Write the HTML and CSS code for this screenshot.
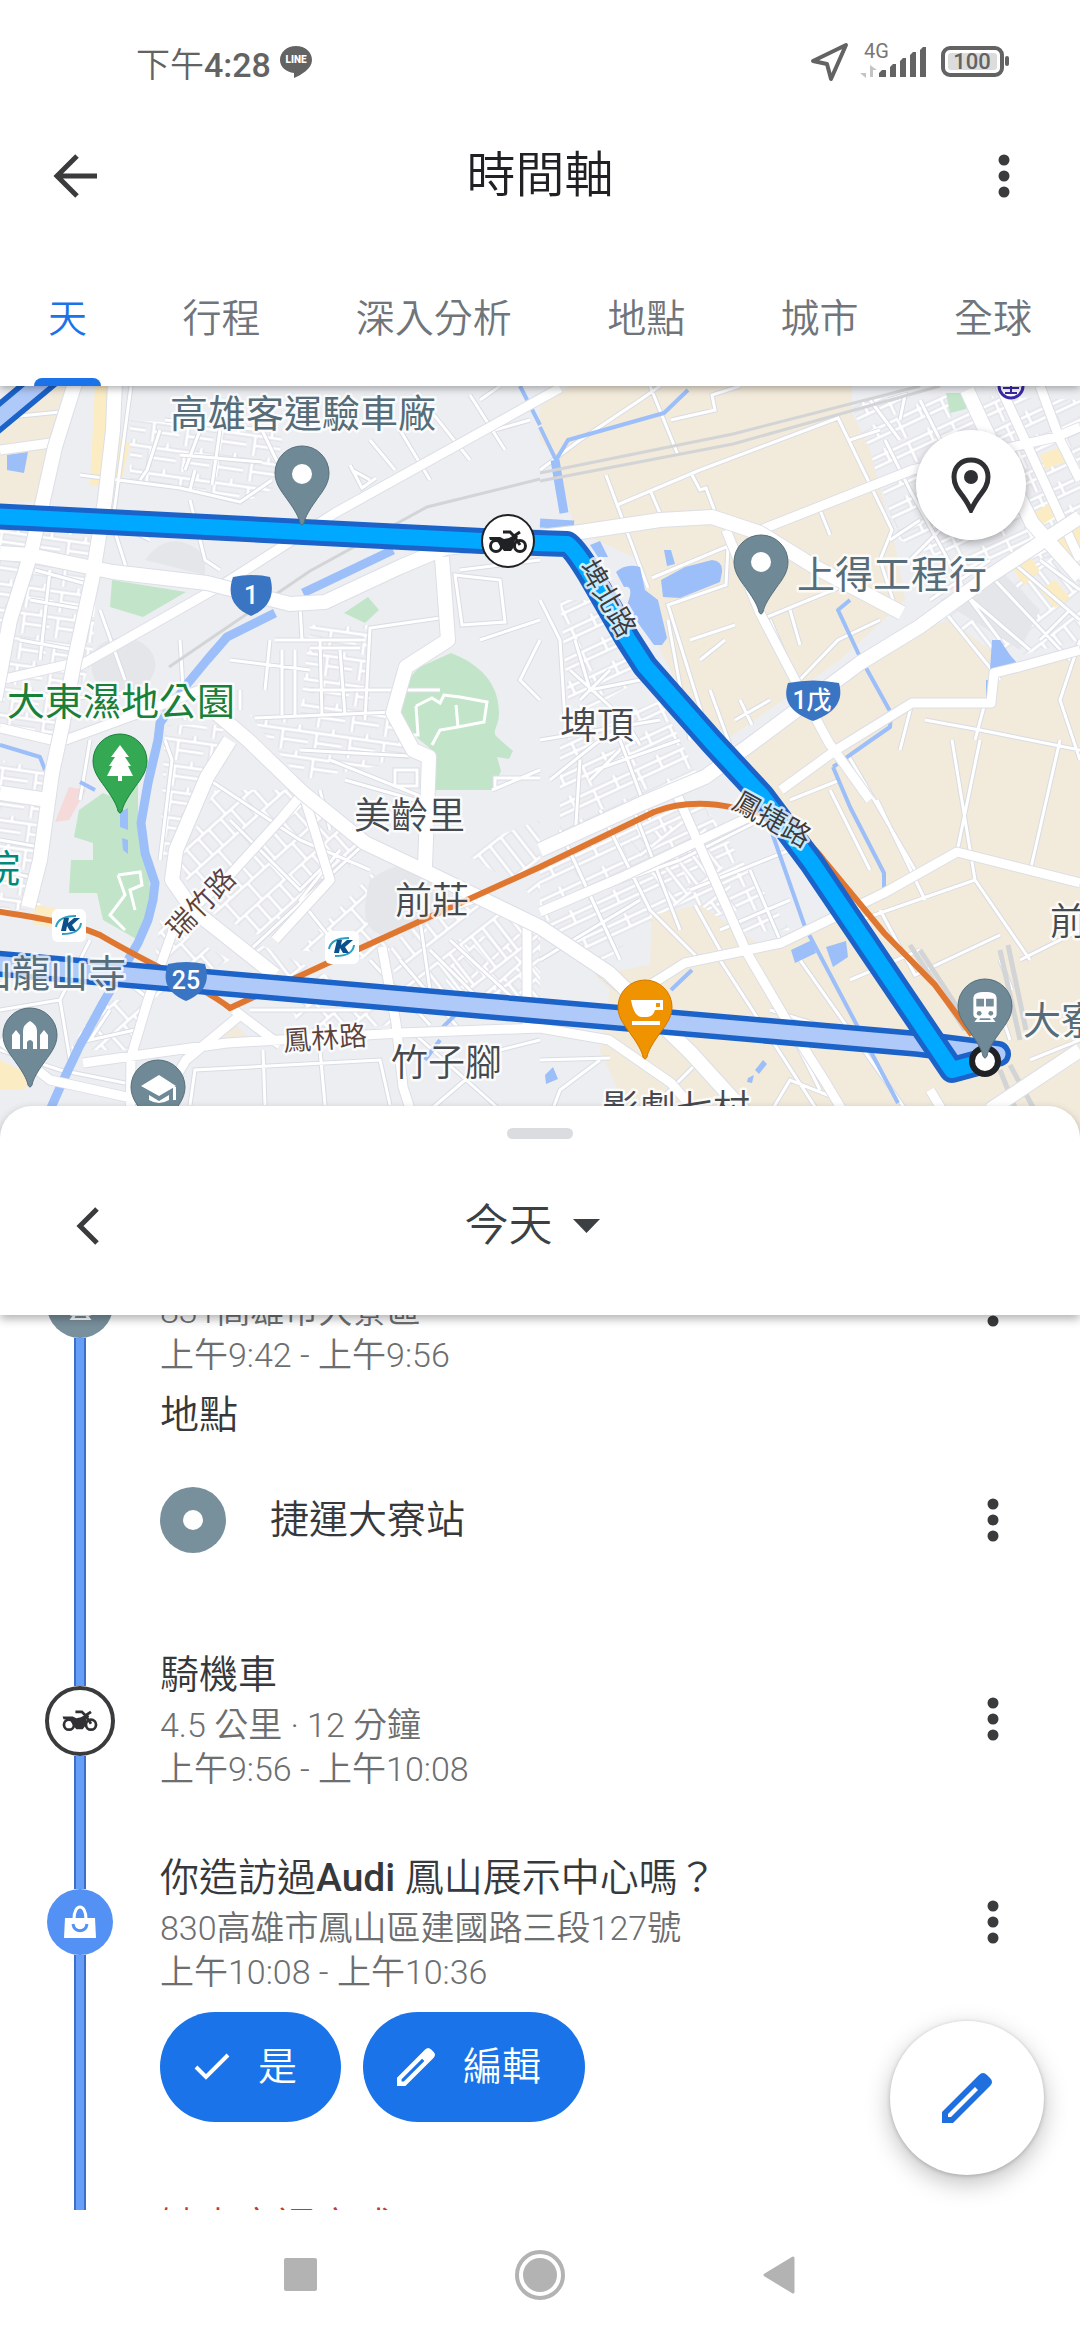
FILE: index.html
```html
<!DOCTYPE html>
<html lang="zh-Hant">
<head>
    <meta charset="UTF-8">
    <meta name="viewport" content="width=device-width, initial-scale=1.0">
    <title>時間軸</title>
    <link rel="stylesheet" href="styles.css">
</head>
<body>

<!-- shared icons -->
<svg class="sprite" aria-hidden="true">
    <symbol id="i-dots" viewBox="0 0 12 44">
        <circle cx="6" cy="6" r="5.5"/><circle cx="6" cy="22" r="5.5"/><circle cx="6" cy="38" r="5.5"/>
    </symbol>
    <symbol id="i-bike" viewBox="0 0 38 24">
        <circle cx="7" cy="16" r="5.5" fill="none" stroke="currentColor" stroke-width="3"/>
        <circle cx="31" cy="16" r="5.5" fill="none" stroke="currentColor" stroke-width="3"/>
        <path d="M0 7h11l4 2 5-1 7-4 2 3-3 3-1 7-3 4h-7l-4-5-3-5-7-1z" fill="currentColor"/>
        <path d="M14 2h7l4 4 6-4M25 6l6 9" fill="none" stroke="currentColor" stroke-width="3"/>
    </symbol>
    <symbol id="i-train" viewBox="0 0 26 32">
        <path d="M4 1.500C8-.5 18-.5 22 1.500 25 3 25 6 25 8v15c0 3-2 4-4 4l3 4H2l3-4c-2 0-4-1-4-4V8c0-2 0-5 3-6.500z" fill="#fff"/>
        <path d="M4 7h8v8H4zM14 7h8v8h-8z" class="pin-ink"/>
        <circle cx="7" cy="22" r="2.500" class="pin-ink"/><circle cx="19" cy="22" r="2.500" class="pin-ink"/>
        <path d="M8 27h10l1 2H7z" class="pin-ink"/>
    </symbol>
    <symbol id="i-pencil" viewBox="0 0 50 50">
        <path d="M0 39 37 2q4-4 8 0l3 3q4 4 0 8L11 50H0zM6 41v3h3l27-27-3-3z" fill-rule="evenodd" fill="currentColor"/>
    </symbol>
    <symbol id="i-pin" viewBox="-30 -30 60 90" overflow="visible">
        <path d="M0-27A27 27 0 0 1 27 0c0 12-8 20-14 29C8 36 3 44 2 50q-2 4-4 0c-1-6-6-14-11-21C-19 20-27 12-27 0A27 27 0 0 1 0-27z"/>
    </symbol>
</svg>

<header class="top">
    <div class="status">
        <span class="clock">下午<b>4:28</b></span>
        <svg class="line-badge" viewBox="0 0 34 34" aria-hidden="true">
            <path d="M17 1C8 1 1 7 1 15c0 7 6 12 14 13v5c7-3 18-9 18-18C33 7 26 1 17 1z" fill="#636363"/>
            <text x="17" y="18" text-anchor="middle" class="line-text">LINE</text>
        </svg>
        <span class="status-gap"></span>
        <svg class="status-icons" viewBox="0 0 200 44" aria-hidden="true">
            <path d="M3 21 36 5 21 39 17 24z" fill="none" stroke="#636363" stroke-width="4" stroke-linejoin="round"/>
            <text x="54" y="18" class="net-text">4G</text>
            <path d="M56 25v8h-6l6 5zM60 37V25l7 5h-4v7z" fill="#c4c4c4"/>
            <path d="M69 37v-4l3-3h4v7zM80 37V27l3-3h3v13zM90 37V21l3-3h3v19zM100 37V15l3-3h3v25zM110 37V10l3-3h3v30z" fill="#636363"/>
            <rect x="133" y="8" width="59" height="27" rx="7" fill="none" stroke="#636363" stroke-width="4"/>
            <rect x="138" y="13" width="49" height="17" rx="3" fill="#dcdcdc"/>
            <rect x="195" y="16" width="4" height="10" rx="2" fill="#636363"/>
            <text x="162" y="29" text-anchor="middle" class="batt-text">100</text>
        </svg>
    </div>
    <div class="appbar">
        <button class="icon-btn" aria-label="返回">
            <svg width="46" height="46" viewBox="0 0 46 46"><path d="M44 23H5M24 3 4 23l20 20" fill="none" stroke="currentColor" stroke-width="5"/></svg>
        </button>
        <h1>時間軸</h1>
        <button class="icon-btn" aria-label="更多選項"><svg class="dots"><use href="#i-dots"/></svg></button>
    </div>
    <nav class="tabs">
        <a class="tab active" href="#day">天</a>
        <a class="tab" href="#trips">行程</a>
        <a class="tab" href="#insights">深入分析</a>
        <a class="tab" href="#places">地點</a>
        <a class="tab" href="#cities">城市</a>
        <a class="tab" href="#world">全球</a>
    </nav>
</header>

<section class="map">
    <svg class="map-canvas" viewBox="0 386 1080 754" preserveAspectRatio="xMidYMin slice" role="img" aria-label="地圖">
        <defs>
            <pattern id="g1" width="34" height="26" patternUnits="userSpaceOnUse" patternTransform="rotate(8)">
                <path class="p-case" d="M0 6h34M8 6v20M24 0v6M8 16h26"/><path class="p-fill" d="M0 6h34M8 6v20M24 0v6M8 16h26"/>
            </pattern>
            <pattern id="g2" width="30" height="44" patternUnits="userSpaceOnUse" patternTransform="rotate(-42)">
                <path class="p-case" d="M0 8h30M0 30h30M6 8v22M20 8v22M13 30v22M13 0v8"/><path class="p-fill" d="M0 8h30M0 30h30M6 8v22M20 8v22M13 30v22M13 0v8"/>
            </pattern>
            <pattern id="g3" width="48" height="26" patternUnits="userSpaceOnUse" patternTransform="rotate(-25)">
                <path class="p-case" d="M0 5h48M12 5v21M0 14h48M36 0v14"/><path class="p-fill" d="M0 5h48M12 5v21M0 14h48M36 0v14"/>
            </pattern>
            <pattern id="g4" width="14" height="60" patternUnits="userSpaceOnUse" patternTransform="rotate(-38)">
                <path class="p-case" d="M0 8h14M5 8v40M0 48h14"/><path class="p-fill" d="M0 8h14M5 8v40M0 48h14"/>
            </pattern>

            <path id="minor" d="M0 418 60 412M80 475 180 488 240 502 272 480M131 386 113 520M160 430 147 470 140 480M165 420 262 430 285 478M200 430 185 470M220 430 212 485M180 455 262 462M195 470 190 490 M352 470 370 480M370 440 395 470M400 430 430 480M430 410 470 460M470 395 505 450M495 430 530 420
                M350 465 362 488 376 478M480 400 500 386M455 575 500 580 505 622 462 625zM460 570 540 560M480 640 540 620M440 618 370 628 365 720M300 606 302 640M310 690 440 690M320 640 322 715M255 718 393 712M270 640 265 690M275 640 365 640M230 660 310 670M240 690 240 710M180 640 185 720M165 740 172 760 160 860
                M310 648 360 648M282 650 282 715M295 650 295 715M340 650 345 715M35 570 90 585M30 600 88 610M20 640 75 650M50 570 40 660M105 500 130 580M110 520 150 540M190 500 205 560 220 570
                M100 610 125 680M60 700 150 690M90 740 80 800M100 760 130 760M0 840 45 848M0 870 42 880M300 750 410 756M330 760 430 800M320 790 330 830M345 780 415 800M395 770h22v16h-22z
                M365 843 250 950M230 820 300 890 330 860M205 777 300 840 370 870M340 850 300 900 340 950M430 990 420 920 480 900M492 790 540 770M495 790v-12h45M540 700 520 680 540 640
                M190 1105 195 1070 380 1060 390 1105M263 1050 265 1105M320 1050 325 1105M400 960 460 1030M430 950 500 1020M450 940 515 1000M370 960 430 1025M250 1010 370 1010M410 1030 500 1110M430 1110 500 1050 540 1040
                M90 940 60 1000 0 1010M60 1000 70 1060M100 960 150 1000M0 1050 60 1070 160 1090M110 1010 90 1040 135 1030
                M540 470 580 440 640 400 660 386M650 386 678 455M671 420 715 410 712 395 740 386M606 475 648 588M650 490 662 518M692 475 700 490 706 488 718 520M617 505 700 470 838 418 892 530 880 560 893 600M540 600 560 640 565 720 590 740M652 578 728 546 726 585 668 605 710 740
                M850 440 880 430M885 440 910 490 970 600 1000 640M870 400 900 440M888 400 905 395 900 420M920 400 940 440M820 510 830 535M760 620 838 588M790 690 838 640 880 620M770 620 785 655M790 610 800 645
                M890 540 920 520M910 560 970 500M930 600 990 560M945 612 1000 680M960 590 1030 650M990 575 1070 660M1010 560 1080 620M1040 560 1080 590M1040 640 1070 610M1080 640 1060 700 1080 760M925 720 980 730 1080 750M985 703 975 740M912 703 900 750M740 700 752 725M735 720 770 700M700 660 725 640M690 640 735 625M710 690 730 745
                M668 620 690 740M575 640 590 690 640 680M570 670 625 720 640 745M580 700 610 670 M540 740 660 720M550 780 600 740M580 760 575 840M590 780 620 750M620 740 650 820M595 770 680 740M560 830 620 960M600 810 650 910M630 800 680 930M540 910 680 860 760 820M540 960 640 900M560 940 630 1000
                M650 910 700 960M695 905 720 950M720 960 830 1130M690 890 790 850M720 930 790 900M750 870 780 940M780 1010 820 1090M800 960 920 1130M770 1010 900 1050M848 755 915 870M877 800 925 900M952 740 975 880M980 740 957 852M1060 740 1030 872M860 920 975 880 1030 960M880 910 915 975 1000 935M850 980 920 950M1080 930 1020 960M1012 990 1000 960M990 980 1010 1040M1030 1060 1080 1040M1030 1080 1070 1060M760 1130 790 1080 840 1100M600 1060 560 1090 545 1130M540 1060 610 1058M650 1110 700 1060M830 790 870 870M790 800 840 780"/>
            <path id="mid" d="M0 450 58 442M560 388 335 513 222 585 72 670M0 728 60 742 148 710 200 690M0 680 74 663M303 793 280 820 230 875 175 925 148 1000 131 1057 130 1140M83 1063 140 1055 227 1043 400 1033 540 1028 609 1040 671 1083 720 1140M234 1010 280 1045M382 947 396 1023 403 1087 420 1140M527 927V1027M238 1017 186 1060 150 1120M0 1040 50 1080 140 1100
                M753 533 912 470 1056 437 1080 427M726 530 760 613 795 680 829 743 870 800M1080 650 1019 667 994 673 991 703 912 703 836 750 781 790M1080 883 957 852 884 893 843 913 781 943 685 963 650 985M678 797 747 953 788 1023 826 1083 860 1140M540 912 620 878 760 812M1000 386 1080 560M1040 386 1060 440 1080 480M930 1090 960 1140M303 793 330 880 275 940"/>
            <path id="major" d="M0 553 30 555 113 572 207 583 290 604 325 602 400 567 445 548 574 533 660 520 712 517 760 533 815 567 902 613M76 380 55 447 42 505 31 553 10 620-5 700M115 380 113 430 105 500 92 580 74 663 62 727 52 773 40 860 28 907M442 557 448 640 406 667 393 713 413 750 429 757 425 867M215 712 248 740 303 793 365 843 437 877 540 927 609 973 691 1053 770 1140
                M230 740 207 777 176 850 172 880 193 910 275 975M0 793 48 800M1080 517 988 577 919 627 860 663 747 747 705 777 643 803 540 850M967 390 984 427 1032 523 1080 577M1080 1050 990 1110"/>
        </defs>

        <rect y="386" width="1080" height="754" class="land"/>
        <!-- street grids -->
        <path d="M0 510 100 520 92 660 60 740 0 735zM0 760 50 770 40 910 0 910zM130 420 280 430 290 480 250 500 130 480zM310 625 370 625 370 710 300 715zM165 725 225 725 180 850 160 860zM250 715 395 715 410 760 300 780z" fill="url(#g1)"/>
        <path d="M215 790 295 790 370 850 270 940 195 905 180 860zM455 940 540 930 540 1010 440 1010zM285 990 400 1000 396 1025 300 1030zM100 1000 150 1000 130 1050 70 1050zM375 870 430 890 430 930 370 960 300 950zM160 920 230 960 150 1000z" fill="url(#g2)"/>
        <path d="M540 860 640 810 700 800 790 930 700 935 660 915 600 965 540 920zM850 400 960 395 1080 400 1080 560 980 575 900 540zM560 740 660 700 700 780 560 840zM560 600 600 600 640 680 570 720z" fill="url(#g3)"/>
        <path d="M440 890 540 930 540 1015 400 1000 390 950zM250 940 380 1000 270 990zM460 850 540 820 540 900zM930 610 1080 530 1080 640 1000 660zM630 840 700 815 740 910 680 920z" fill="url(#g4)"/>
        <!-- farmland -->
        <path d="M570 386 852 386 852 413 870 450 895 545 905 600 840 660 712 750 655 640 640 560 575 530 556 460 540 440 540 400z" class="farm"/>
        <path d="M747 750 860 670 919 630 950 620 990 650 1020 670 1080 655 1080 1140 640 1140 600 1050 610 990 595 975 650 965 652 915 700 905 760 945 840 920 810 850 740 800z" class="farm"/>
        <path d="M0 400 68 386 55 447 38 500 0 505zM231 1020 248 1037 210 1042z" class="farm"/>
        <path d="M95 386h14l-8 100H90zM120 440l10 4-8 35-8-2zM1040 455l20-8 5 15-20 7zM1030 515l20-12 8 12-20 12zM1055 540l25-18v35l-12 5zM1010 565l18-12 12 18-16 14zM1040 590l15-10 15 18-15 10zM0 1060 30 1075 25 1090H0zM35 905l20 3-2 20-20-4z" class="shop"/>
        <path d="M370 880q40-30 70 0t-30 50-40-50zM95 650a30 25 0 1 1 55 30 30 30 0 0 1-55-30zM145 560q25-35 60-5v20zM940 600l60-30 40 40-20 40z" class="shade"/>
        <!-- parks -->
        <path d="M451 653c26 10 48 28 48 60 0 14-8 18-2 24l16 14-4 8-12-2 4 14-9 19H434l-2-40-22-18c-16-20-9-52 12-66zM112 580 186 592 143 617 110 607zM344 613 368 597 379 610 365 623zM946 393l20 0 0 16-16 4zM138 823 148 867 151 897 138 940 103 920 97 893 69 893 71 860 93 860 93 843 74 837 79 810 103 793 120 800 138 770z" class="park"/>
        <path d="M69 787 86 790 69 820 55 822z" fill="#f6dada"/>
        <path d="M416 706 432 698 440 703 444 695 460 697 487 702 484 722 458 727 456 705M432 745 440 730 458 727M416 706 418 735 410 735M118 875 140 872 142 885 130 890 135 910M118 875 125 895 110 915 125 930" class="trail"/>

        <use href="#minor" class="minor-case"/><use href="#minor" class="minor"/>
        <!-- water -->
        <g class="water-line">
            <path d="M393 550 303 593M275 613 227 637 207 660 188 683 160 723 158 740 148 783 141 823 145 853 155 883 153 900 148 920 138 943 103 1003 79 1047 62 1083 50 1110M555 460 564 513M540 523 574 525"/>
            <path class="thin" d="M540 427 556 460 568 440 664 413 688 390M771 830 805 927 898 1103M833 767 850 807 884 873 884 890M850 600 838 610 860 657 891 713 890 727 867 743 833 767M692 970 671 990M988 680V700M0 745 40 757 45 770M520 386 540 425M95 790 80 782M455 1015 440 1030M440 1040 425 1060"/>
        </g>
        <path d="M616 572q10-9 24-5l5 23 13 10 9 38-5 7h-8l-16-22-11-18q8-20-3-18zM661 580l24-13 27-7q11 1 10 12l-2 10-40 16-17-1zM664 550h7l4 14-8 2zM992 640l8 0 10 15 9 10-29 5zM791 950 812 940 816 953 795 963zM826 947 846 941 848 957 833 967zM7 455 28 452 24 473 7 470zM120 812l8-4v22l-8-3zM122 838l6 2v14l-5-4zM545 1075l8-8 5 12-12 5zM755 1070l8-10 4 4-8 10zM748 1078l6-3-2 8-5-1zM590 545l10-4 8 16h-10z" class="water"/>

        <path d="M540 479 427 507 310 571 213 637 169 667M540 473 733 434 920 386M540 481 733 444 940 386" class="rail-line"/>
        <path d="M1000 950 1020 1040M1008 945 1026 1030M910 945 965 1030M920 950 972 1030M1000 1070 1020 1120M1010 1065 1040 1120" class="rail-line yard"/>
        <use href="#mid" class="mid-case"/><use href="#mid" class="mid"/>
        <use href="#major" class="major-case"/><use href="#major" class="major"/>

        <!-- metro line -->
        <path d="M-5 911C40 918 75 924 100 935 150 965 200 985 230 1008L330 962 540 867 654 812Q690 798 735 808 790 815 826 863L884 933 935 985 972 1035" class="metro"/>

        <!-- recorded routes -->
        <path d="M-10 963 540 1011 919 1044 998 1054M-10 425 50 375" class="route-case"/>
        <path d="M-10 963 540 1011 919 1044 998 1054M-10 425 50 375" class="route-old"/>
        <path d="M-10 516 482 541 567 544Q574 548 590 574L627 638 645 666 712 742 762 796 812 863 952 1070 985 1061" class="route-case"/>
        <path d="M-10 516 482 541 567 544Q574 548 590 574L627 638 645 666 712 742 762 796 812 863 952 1070 985 1061" class="route-now"/>

        <!-- road shields -->
        <g class="shield">
            <path d="M233 577q18-4 37 0c6 20-3 32-19 39-16-7-25-19-18-39z"/><text x="251" y="604">1</text>
            <path d="M168 964q18-4 37 0c6 20-3 30-19 37-16-7-25-17-18-37z"/><text x="186" y="989">25</text>
            <path d="M788 683q25-5 51 0c5 18-4 30-26 38-22-8-31-20-25-38z"/><text x="812" y="709">1戊</text>
        </g>

        <!-- metro stations -->
        <g id="krtc">
            <rect x="52" y="909" width="34" height="33" rx="6" fill="#fff"/>
            <path d="M56 927q2-11 20-11M81 923q-1 11-19 11" fill="none" stroke="#2a9fbf" stroke-width="2"/>
            <path d="M64 918h5l-1 5 6-5h6l-8 7 4 6h-6l-3-5-1 5h-5z" fill="#0b4f8c"/>
        </g>
        <use href="#krtc" x="273" y="22"/>
        <circle cx="1011" cy="386" r="12" fill="#fff" stroke="#3b2aa8" stroke-width="3"/>
        <path d="M1003 388h16M1011 380v14M1005 393h12" stroke="#3b2aa8" stroke-width="2" fill="none"/>

        <!-- pins -->
        <use href="#i-pin" x="272" y="443" width="60" height="90" class="pin"/><circle cx="302" cy="474" r="10" fill="#fff"/>
        <use href="#i-pin" x="731" y="532" width="60" height="90" class="pin"/><circle cx="761" cy="562" r="10" fill="#fff"/>
        <use href="#i-pin" x="90" y="731" width="60" height="90" class="pin green"/>
        <path d="M120 745l9 12h-4l6 9h-3l5 10h-11v5h-4v-5h-11l5-10h-3l6-9h-4z" fill="#fff"/>
        <use href="#i-pin" x="615" y="977" width="60" height="90" class="pin orange"/>
        <path d="M631 1000h32v10h-8q-2 7-8 7h-5q-8 0-11-17zM632 1021h28v4h-28z" fill="#fff"/><rect x="656" y="1003" width="4" height="4" fill="#f09300"/>
        <use href="#i-pin" y="1005" width="60" height="90" class="pin"/>
        <path d="M12 1049v-14l4-5 4 5v14zM23 1049v-18q0-6 7-10 7 4 7 10v18h-4v-7q-3-4-6 0v7zM40 1049v-14l4-5 4 5v14z" fill="#fff"/>
        <use href="#i-pin" x="128" y="1057" width="60" height="90" class="pin"/>
        <path d="M141 1086l18-11 17 11-17 10zM149 1095l10 6 10-6v5q-10 6-20 0zM173 1087h3v13h-3z" fill="#fff"/>
        <circle cx="985" cy="1061" r="13" fill="#fff" stroke="#202124" stroke-width="6"/>
        <use href="#i-pin" x="955" y="976" width="60" height="90" class="pin"/><use href="#i-train" x="972" y="992" width="26" height="31"/>
        <circle cx="508" cy="541" r="26" fill="#fff" stroke="#202124" stroke-width="2"/>
        <use href="#i-bike" x="489" y="530" width="38" height="24" color="#202124"/>

        <!-- labels -->
        <g class="label poi">
            <text x="170" y="427">高雄客運驗車廠</text>
            <text x="797" y="588">上得工程行</text>
            <text x="-26" y="987">山龍山寺</text>
            <text x="1023" y="1034">大寮</text>
            <text x="7" y="715" class="green-text">大東濕地公園</text>
            <text x="-18" y="882" class="teal-text">院</text>
        </g>
        <g class="label town">
            <text x="560" y="739">埤頂</text>
            <text x="354" y="829">美齡里</text>
            <text x="395" y="914">前莊</text>
            <text x="391" y="1076">竹子腳</text>
            <text x="1050" y="935">前</text>
            <text x="602" y="1122">影劇七村</text>
        </g>
        <g class="label street">
            <text transform="translate(608 598) rotate(60)" y="10">埤北路</text>
            <text transform="translate(772 819) rotate(29)" y="10">鳳捷路</text>
            <text transform="translate(201 903) rotate(-46)" y="10" class="brown-text">瑞竹路</text>
            <text transform="translate(325 1038) rotate(-4)" y="10" class="brown-text">鳳林路</text>
        </g>
    </svg>
    <button class="place-btn" aria-label="地點">
        <svg width="40" height="56" viewBox="0 0 40 56">
            <path d="M20 3C10 3 3 10 3 20c0 9 5 14 10 21 3 4 5 8 7 12 2-4 4-8 7-12 5-7 10-12 10-21C37 10 30 3 20 3z" fill="none" stroke="currentColor" stroke-width="5"/>
            <circle cx="20" cy="20" r="7" fill="currentColor"/>
        </svg>
    </button>
</section>

<section class="sheet">
    <div class="handle"></div>
    <div class="daybar">
        <button class="icon-btn prev" aria-label="前一天">
            <svg width="24" height="38" viewBox="0 0 24 38"><path d="M21 2 4 19l17 17" fill="none" stroke="currentColor" stroke-width="5"/></svg>
        </button>
        <button class="day">今天 <svg width="27" height="14" viewBox="0 0 27 14"><path d="M0 0h27L13.500 14z" fill="currentColor"/></svg></button>
    </div>
</section>

<main class="timeline">
    <ul class="items">
        <li class="item">
            <div class="rail">
                <span class="seg lead"></span>
                <span class="dot gray"><svg width="27" height="32"><use href="#i-train"/></svg></span>
                <span class="seg"></span>
            </div>
            <div class="body">
                <div class="head">
                    <div>
                        <h2>捷運大寮站</h2>
                        <p>831高雄市大寮區</p>
                        <p>上午9:42 - 上午9:56</p>
                    </div>
                    <button class="icon-btn" aria-label="更多選項"><svg class="dots"><use href="#i-dots"/></svg></button>
                </div>
                <h3>地點</h3>
                <div class="place">
                    <span class="dot gray"><span class="hole"></span></span>
                    <span class="place-name">捷運大寮站</span>
                    <button class="icon-btn" aria-label="更多選項"><svg class="dots"><use href="#i-dots"/></svg></button>
                </div>
            </div>
        </li>
        <li class="item">
            <div class="rail">
                <span class="seg lead"></span>
                <span class="dot ring"><svg width="36" height="22"><use href="#i-bike"/></svg></span>
                <span class="seg"></span>
            </div>
            <div class="body">
                <div class="head">
                    <div>
                        <h2>騎機車</h2>
                        <p>4.5 公里 · 12 分鐘</p>
                        <p>上午9:56 - 上午10:08</p>
                    </div>
                    <button class="icon-btn" aria-label="更多選項"><svg class="dots"><use href="#i-dots"/></svg></button>
                </div>
            </div>
        </li>
        <li class="item">
            <div class="rail">
                <span class="seg lead"></span>
                <span class="dot blue">
                    <svg width="32" height="34" viewBox="0 0 32 34">
                        <path d="M1 13h30l1 20H0z" fill="#fff"/>
                        <path d="M10 14c0-16 12-16 12 0" fill="none" stroke="#fff" stroke-width="3"/>
                        <path d="M9 19c1 9 13 9 14 0" fill="none" stroke="#5491f5" stroke-width="3"/>
                    </svg>
                </span>
                <span class="seg"></span>
            </div>
            <div class="body">
                <div class="head">
                    <div>
                        <h2>你造訪過<b>Audi</b> 鳳山展示中心嗎？</h2>
                        <p>830高雄市鳳山區建國路三段127號</p>
                        <p>上午10:08 - 上午10:36</p>
                    </div>
                    <button class="icon-btn" aria-label="更多選項"><svg class="dots"><use href="#i-dots"/></svg></button>
                </div>
                <div class="actions">
                    <button class="pill"><svg width="36" height="28" viewBox="0 0 36 28"><path d="M2 14l10 10L34 2" fill="none" stroke="currentColor" stroke-width="4"/></svg><span>是</span></button>
                    <button class="pill"><svg width="38" height="38"><use href="#i-pencil"/></svg><span>編輯</span></button>
                </div>
            </div>
        </li>
        <li class="item">
            <div class="rail"><span class="seg"></span></div>
            <div class="body"><h2 class="missing">缺少交通方式</h2></div>
        </li>
    </ul>
    <button class="fab" aria-label="編輯"><svg width="50" height="50"><use href="#i-pencil"/></svg></button>
</main>

<footer class="sysnav">
    <button aria-label="最近使用"><svg width="34" height="34"><rect width="33" height="33" rx="2" fill="#b3b3b3"/></svg></button>
    <button aria-label="主畫面"><svg width="50" height="50"><circle cx="25" cy="25" r="23" fill="none" stroke="#b3b3b3" stroke-width="4"/><circle cx="25" cy="25" r="17" fill="#b3b3b3"/></svg></button>
    <button aria-label="返回"><svg width="34" height="38"><path d="M31 2v34L3 19z" fill="#b3b3b3" stroke="#b3b3b3" stroke-width="3" stroke-linejoin="round"/></svg></button>
</footer>

</body>
</html>
```
FILE: styles.css
```css
* {
    box-sizing: border-box;
}
body {
    margin: 0;
    height: 100vh;
    display: flex;
    flex-direction: column;
    overflow: hidden;
    background: #fff;
    color: #3c4043;
    font-family: Roboto, "Noto Sans CJK TC", sans-serif;
    font-weight: 350;
}
h1, h2, h3, p, ul {
    margin: 0;
    padding: 0;
    font-weight: 350;
}
button {
    border: 0;
    padding: 0;
    background: none;
    color: inherit;
    font: inherit;
}
svg {
    display: block;
}
.sprite {
    position: absolute;
    width: 0;
    height: 0;
}
.icon-btn {
    width: 96px;
    height: 96px;
    display: flex;
    align-items: center;
    justify-content: center;
    color: #3a3b3d;
}
.dots {
    width: 12px;
    height: 44px;
    fill: #3a3b3d;
}

/* top */
.top {
    position: relative;
    z-index: 2;
    background: #fff;
    box-shadow: 0 2px 8px rgba(0, 0, 0, 0.35);
}
.status {
    height: 124px;
    padding: 0 70px 0 136px;
    display: flex;
    align-items: center;
    color: #636363;
}
.clock {
    font-size: 34px;
}
.clock b {
    font-weight: 500;
}
.line-badge {
    width: 34px;
    height: 34px;
    margin-left: 8px;
}
.line-text {
    font-size: 10px;
    font-weight: 900;
    fill: #fff;
}
.status-gap {
    flex: 1;
}
.status-icons {
    width: 200px;
    height: 44px;
}
.net-text {
    font-size: 20px;
    font-weight: 400;
    fill: #777;
}
.batt-text {
    font-size: 22px;
    font-weight: 500;
    fill: #636363;
}
.appbar {
    height: 104px;
    padding: 0 28px;
    display: flex;
    align-items: center;
    justify-content: space-between;
}
.appbar h1 {
    font-size: 49px;
    line-height: 64px;
    color: #202124;
}
.tabs {
    height: 158px;
    padding: 0 34px;
    display: flex;
    justify-content: space-between;
}
.tab {
    position: relative;
    padding: 63px 14px 0;
    font-size: 39px;
    line-height: 56px;
    color: #6f757b;
    text-decoration: none;
    white-space: nowrap;
}
.tab.active {
    color: #1a73e8;
}
.tab.active::after {
    content: "";
    position: absolute;
    left: 0;
    right: 0;
    bottom: 0;
    height: 8px;
    border-radius: 8px 8px 0 0;
    background: #1a73e8;
}

/* map */
.map {
    position: relative;
    height: 752px;
    flex: none;
    overflow: hidden;
}
.map-canvas {
    width: 100%;
    height: 100%;
}
.land { fill: #eceef2; }
.farm { fill: #f2eadb; }
.shop { fill: #fbecc4; }
.shade { fill: #e4e6ea; }
.park { fill: #c2e5ca; }
.water { fill: #9cbff9; }
.water-line path {
    fill: none;
    stroke: #9cbff9;
    stroke-width: 9;
    stroke-linejoin: round;
}
.water-line .thin {
    stroke-width: 4;
}
.trail {
    fill: none;
    stroke: #fff;
    stroke-width: 3;
}
.p-case, .minor-case {
    fill: none;
    stroke: #d9dce3;
    stroke-width: 5;
}
.p-fill, .minor {
    fill: none;
    stroke: #fff;
    stroke-width: 3;
}
.mid-case, .mid, .major-case, .major {
    fill: none;
    stroke-linejoin: round;
}
.mid-case { stroke: #dcdfe5; stroke-width: 11; }
.mid { stroke: #fff; stroke-width: 9; }
.major-case { stroke: #dcdfe5; stroke-width: 16; }
.major { stroke: #fff; stroke-width: 14; }
.rail-line {
    fill: none;
    stroke: #d3d4d6;
    stroke-width: 3;
}
.yard {
    stroke-width: 5;
}
.metro {
    fill: none;
    stroke: #e07730;
    stroke-width: 6;
}
.route-case, .route-old, .route-now {
    fill: none;
    stroke-linecap: round;
    stroke-linejoin: round;
}
.route-case { stroke: #1b62c9; stroke-width: 26; }
.route-old { stroke: #afc9f9; stroke-width: 15; }
.route-now { stroke: #00a8ff; stroke-width: 16; }
.shield path { fill: #3a75c4; }
.shield text {
    fill: #fff;
    font-size: 25px;
    font-weight: 500;
    text-anchor: middle;
}
.pin { fill: #6f8a96; stroke: #546e7a; stroke-width: 1; }
.pin.green { fill: #34a853; stroke: #188038; }
.pin.orange { fill: #f09300; stroke: #d07800; }
.pin-ink { fill: #748d98; }
.label text {
    stroke: #fff;
    stroke-width: 5;
    stroke-linejoin: round;
    stroke-opacity: 0.8;
    paint-order: stroke;
}
.poi { font-size: 38px; font-weight: 400; fill: #566d79; }
.town { font-size: 37px; fill: #46494d; }
.street { font-size: 28px; fill: #3c3a3a; text-anchor: middle; }
.green-text { fill: #188038; }
.teal-text { fill: #00897b; }
.brown-text { fill: #5b423c; }
.place-btn {
    position: absolute;
    top: 44px;
    right: 54px;
    width: 110px;
    height: 110px;
    border-radius: 50%;
    display: flex;
    align-items: center;
    justify-content: center;
    background: #fff;
    color: #2f3033;
    box-shadow: 0 3px 8px rgba(0, 0, 0, 0.3);
}

/* bottom sheet */
.sheet {
    position: relative;
    z-index: 2;
    height: 209px;
    margin-top: -32px;
    padding-top: 22px;
    flex: none;
    border-radius: 32px 32px 0 0;
    background: #fff;
    box-shadow: 0 4px 10px rgba(0, 0, 0, 0.3);
}
.handle {
    width: 66px;
    height: 11px;
    margin: 0 auto;
    border-radius: 6px;
    background: #dadce0;
}
.daybar {
    height: 176px;
    padding: 0 40px 2px;
    display: grid;
    grid-template-columns: 96px 1fr 112px;
    align-items: center;
}
.day {
    display: flex;
    align-items: center;
    justify-content: center;
    gap: 20px;
    font-size: 44px;
    line-height: 64px;
}

/* timeline */
.timeline {
    position: relative;
    flex: 1;
    min-height: 0;
    overflow: hidden;
}
.items {
    margin-top: -112px;
    list-style: none;
}
.item {
    display: flex;
}
.rail {
    width: 160px;
    flex: none;
    display: flex;
    flex-direction: column;
    align-items: center;
}
.seg {
    flex: 1;
    width: 12px;
    border: solid #3c6fc9;
    border-width: 0 2px;
    background: #669df6;
}
.seg.lead {
    flex: none;
    height: 69px;
}
.dot {
    width: 66px;
    height: 66px;
    flex: none;
    border-radius: 50%;
    display: flex;
    align-items: center;
    justify-content: center;
}
.dot.gray { background: #78909c; }
.dot.blue { background: #5491f5; }
.dot.ring {
    width: 70px;
    height: 70px;
    border: 4px solid #3a3b3d;
    color: #303134;
}
.hole {
    width: 20px;
    height: 20px;
    border-radius: 50%;
    background: #fff;
}
.body {
    flex: 1;
    padding: 30px 39px 29px 0;
}
.head {
    display: flex;
    align-items: center;
    justify-content: space-between;
}
.body h2, .body h3, .place-name {
    font-size: 39px;
    line-height: 56px;
    color: #36393c;
}
.body h2 b {
    font-weight: 500;
}
.body p {
    font-size: 34px;
    line-height: 44px;
    color: #6c6e70;
}
.body h3 {
    margin-top: 10px;
}
.place {
    margin: 29px 0 20px;
    display: flex;
    align-items: center;
}
.place-name {
    flex: 1;
    margin-left: 44px;
}
.actions {
    margin: 18px 0;
    display: flex;
    gap: 22px;
}
.pill {
    height: 110px;
    padding: 0 44px 0 34px;
    border-radius: 55px;
    display: flex;
    align-items: center;
    gap: 28px;
    background: #1a73e8;
    color: #fff;
    font-size: 39px;
}
.pill span {
    padding-bottom: 8px;
}
.body .missing {
    color: #c5392e;
}
.fab {
    position: absolute;
    right: 36px;
    bottom: 35px;
    width: 154px;
    height: 154px;
    border-radius: 50%;
    display: flex;
    align-items: center;
    justify-content: center;
    background: #fff;
    color: #1f6fde;
    box-shadow: 0 8px 24px rgba(0, 0, 0, 0.25), 0 1px 4px rgba(0, 0, 0, 0.2);
}
.sysnav {
    height: 130px;
    flex: none;
    display: flex;
    justify-content: center;
}
.sysnav button {
    width: 239px;
    display: flex;
    align-items: center;
    justify-content: center;
}
```
